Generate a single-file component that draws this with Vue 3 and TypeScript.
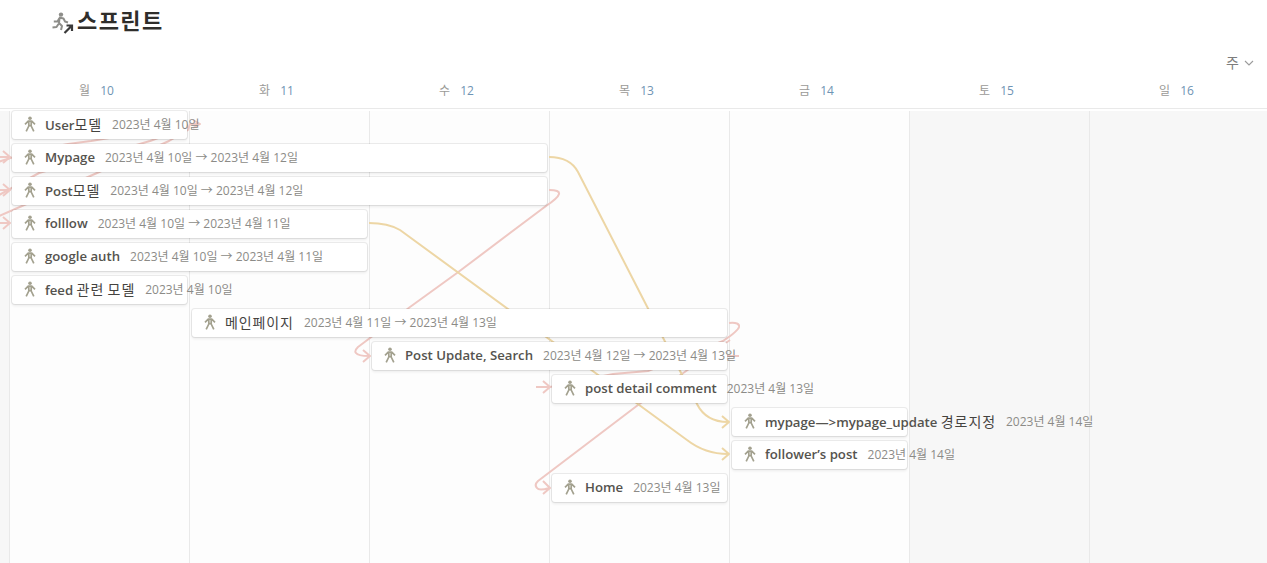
<script setup lang="ts">
interface Day {
  label: string
  num: number
}
interface Task {
  name: string
  date: string
  start: number
  span: number
  row: number
}

const days: Day[] = [
  { label: '월', num: 10 },
  { label: '화', num: 11 },
  { label: '수', num: 12 },
  { label: '목', num: 13 },
  { label: '금', num: 14 },
  { label: '토', num: 15 },
  { label: '일', num: 16 },
]

const tasks: Task[] = [
  { name: 'User모델', date: '2023년 4월 10일', start: 0, span: 1, row: 1 },
  { name: 'Mypage', date: '2023년 4월 10일 → 2023년 4월 12일', start: 0, span: 3, row: 2 },
  { name: 'Post모델', date: '2023년 4월 10일 → 2023년 4월 12일', start: 0, span: 3, row: 3 },
  { name: 'folllow', date: '2023년 4월 10일 → 2023년 4월 11일', start: 0, span: 2, row: 4 },
  { name: 'google auth', date: '2023년 4월 10일 → 2023년 4월 11일', start: 0, span: 2, row: 5 },
  { name: 'feed 관련 모델', date: '2023년 4월 10일', start: 0, span: 1, row: 6 },
  { name: '메인페이지', date: '2023년 4월 11일 → 2023년 4월 13일', start: 1, span: 3, row: 7 },
  { name: 'Post Update, Search', date: '2023년 4월 12일 → 2023년 4월 13일', start: 2, span: 2, row: 8 },
  { name: 'post detail comment', date: '2023년 4월 13일', start: 3, span: 1, row: 9 },
  { name: 'mypage—>mypage_update 경로지정', date: '2023년 4월 14일', start: 4, span: 1, row: 10 },
  { name: 'follower’s post', date: '2023년 4월 14일', start: 4, span: 1, row: 11 },
  { name: 'Home', date: '2023년 4월 13일', start: 3, span: 1, row: 12 },
]

// korean runs get wider spacing and a lighter weight, like the original font pairing
function splitName(name: string) {
  return (name.match(/[가-힣]+|[^가-힣]+/g) ?? []).map((text) => ({
    text,
    ko: /[가-힣]/.test(text),
  }))
}

// connectors, in page coordinates
const pink: string[] = [
  'M-2 157 H9 M3 151 L10 157 L3 163',
  'M-2 190 H9 M3 184 L10 190 L3 196',
  'M-2 223 H9 M3 217 L10 223 L3 229',
  'M-10 220 L22 206 L97 173 L169 141 L188 130 L190 124 H199 M193 120 L200 124 L193 128',
  'M-10 200 L39 173 L150 141 L188 127',
  'M-10 165 Q40 146 91 141 L188 125',
  'M549 190 Q560 190 559 194 Q558 198 546 206 L457 273 L410 307 L370 338 L358 347 Q354 351 356 353 Q358 356 369 356 M363 350 L370 356 L363 362',
  'M729 323 Q740 322 739 327 Q738 331 723 341 L648 371 L613 374 L550 387 H536 M543 381 L550 387 L543 393',
  'M727 356 H739',
  'M730 340 L638 405 L538 481 Q534 485 537 488 Q539 491 549 488 M543 481 L550 488 L543 494',
]
const yellow: string[] = [
  'M549 157 Q570 157 578 172 L697 404 Q706 422 728 422 M722 416 L729 422 L722 428',
  'M369 223 Q388 223 400 230 L687 440 Q705 454 728 454 M722 448 L729 454 L722 460',
]
</script>

<template>
  <div class="page">
    <header class="title">
      <svg class="title-icon" viewBox="0 0 24 24" width="24" height="24">
        <circle cx="11" cy="3.6" r="2.2" fill="#8e8e8a" />
        <path d="M9 6.5 L13.5 7.5 L15 10.5 L18 11.5 M9.5 7 L7.5 10.5 L3.8 10.5 M9.5 7.5 L9 12 L12 15 L11 19 M8.5 13 L6.5 16 L2.5 16.5" fill="none" stroke="#8e8e8a" stroke-width="2" stroke-linejoin="round" />
        <path d="M14.5 22 L22 14.5 M16.5 14.5 H22 V20" fill="none" stroke="#3a3a3a" stroke-width="2.2" />
      </svg>
      <h1>스프린트</h1>
    </header>

    <div class="view-switch">
      <span>주</span>
      <svg viewBox="0 0 10 6" width="10" height="6">
        <path d="M1 1 L5 5 L9 1" fill="none" stroke="#9b9b9b" stroke-width="1.1" />
      </svg>
    </div>

    <div class="week">
      <div v-for="d in days" :key="d.num" class="week-day">
        <span class="week-label">{{ d.label }}</span>
        <span class="week-num">{{ d.num }}</span>
      </div>
    </div>

    <div class="timeline">
      <div class="col weekend lead"></div>
      <div
        v-for="(d, i) in days"
        :key="d.num"
        class="col"
        :class="{ weekend: i > 4 }"
        :style="{ gridColumn: i + 2 }"
      ></div>

      <svg class="links" width="1267" height="454" viewBox="0 109 1267 454">
        <path v-for="p in pink" :key="p" :d="p" class="link pink" />
        <path v-for="p in yellow" :key="p" :d="p" class="link yellow" />
      </svg>

      <div
        v-for="t in tasks"
        :key="t.name"
        class="card"
        :style="{ gridColumn: `${t.start + 2} / span ${t.span}`, gridRow: t.row }"
      >
        <svg class="walk" viewBox="0 0 14 16" width="14" height="16">
          <circle cx="7" cy="2.2" r="1.8" fill="#a3a18f" />
          <path d="M2 8.4 L5.2 5.2 H8.8 L12 8.4 M5.8 5.4 V10 L3.2 15.4 M8.2 5.4 V10 L10.8 15.4 M5.8 9.6 H8.2" fill="none" stroke="#a3a18f" stroke-width="1.7" stroke-linejoin="round" />
        </svg>
        <span class="name">
          <span v-for="(part, i) in splitName(t.name)" :key="i" :class="{ ko: part.ko }">{{ part.text }}</span>
        </span>
        <span class="date">{{ t.date }}</span>
      </div>
    </div>
  </div>
</template>

<style scoped>
.page {
  height: 563px;
  overflow: hidden;
  background: #fff;
  display: flex;
  flex-direction: column;
  font-family: "Open Sans", "Noto Sans CJK KR", sans-serif;
  color: #37352f;
}

.title {
  height: 45px;
  padding-left: 50px;
  display: flex;
  align-items: center;
  gap: 3px;
  flex-shrink: 0;
}

.title-icon {
  flex-shrink: 0;
}

h1 {
  margin: 0 0 5px;
  font-size: 22px;
  letter-spacing: 1.4px;
  line-height: 1;
  font-weight: 700;
  color: #2f2e2b;
}

.view-switch {
  height: 35px;
  padding-right: 13px;
  display: flex;
  justify-content: flex-end;
  align-items: flex-start;
  gap: 5px;
  font-size: 14px;
  line-height: 35px;
  color: #7d7d7d;
  flex-shrink: 0;
}

.view-switch svg {
  margin-top: 15px;
}

.week {
  height: 28px;
  padding-left: 10px;
  display: grid;
  grid-template-columns: repeat(7, 180px);
  border-bottom: 1px solid #e9e9e9;
  flex-shrink: 0;
}

.week-day {
  display: flex;
  justify-content: center;
  gap: 10px;
  padding-right: 7px;
  padding-top: 1px;
  font-size: 12px;
  line-height: 20px;
}

.week-label {
  color: #9b9a97;
}

.week-num {
  color: #6f94b4;
}

.timeline {
  position: relative;
  flex: 1;
  display: grid;
  grid-template-columns: 10px repeat(7, 180px);
  grid-auto-rows: 33px;
  padding-top: 2px;
}

.col {
  grid-row: 1 / span 14;
  background: #fdfdfd;
  border-right: 1px solid #e9e9e9;
}

.col.lead {
  grid-column: 1;
}

.col.weekend {
  background: #f7f7f7;
}

.links {
  position: absolute;
  left: 0;
  top: 0;
  overflow: visible;
}

.link {
  fill: none;
  stroke-width: 2;
  stroke-linejoin: round;
}

.pink {
  stroke: #efc8c3;
}

.yellow {
  stroke: #edd6a5;
}

.card {
  position: relative;
  height: 28px;
  margin: 0 3px 0 2px;
  padding-left: 11px;
  padding-bottom: 2px;
  box-sizing: border-box;
  display: flex;
  align-items: center;
  background: #fff;
  border-radius: 3px;
  box-shadow: 0 0 0 1px rgba(15, 15, 15, 0.08), 0 2px 3px rgba(15, 15, 15, 0.07);
  white-space: nowrap;
}

.walk {
  flex-shrink: 0;
  margin-right: 8px;
}

.name {
  font-size: 13.2px;
  font-weight: 600;
  color: #55534e;
  margin-right: 10px;
}

.ko {
  font-size: 14px;
  font-weight: 400;
  letter-spacing: 0.9px;
  color: #45433f;
}

.date {
  font-size: 12px;
  color: #8c8b87;
}
</style>

<style>
html,
body {
  margin: 0;
  overflow: hidden;
  background: #fff;
}
</style>
